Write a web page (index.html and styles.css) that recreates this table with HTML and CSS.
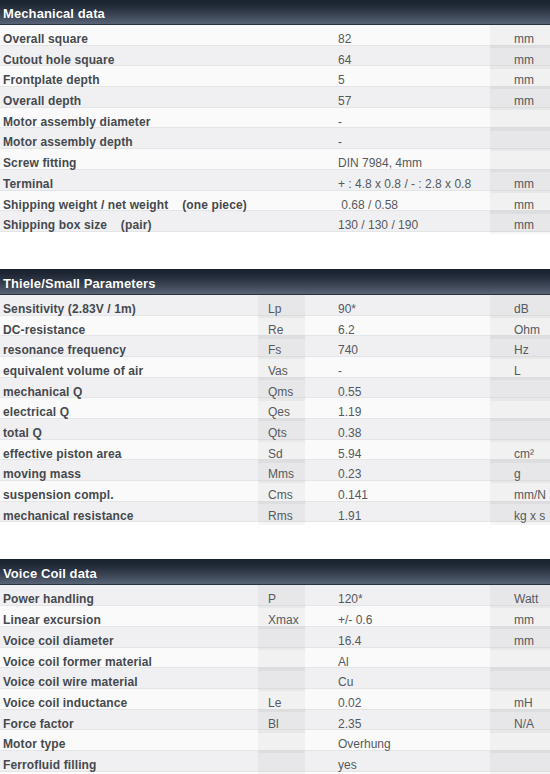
FILE: index.html
```html
<!DOCTYPE html>
<html>
<head>
<meta charset="utf-8">
<link rel="stylesheet" href="styles.css">
</head>
<body>
<section class="block lead">
  <div class="head">Mechanical data</div>
  <div class="row"><span class="lbl">Overall square</span><span class="sym plain"></span><span class="val">82</span><span class="unit">mm</span></div>
  <div class="row"><span class="lbl">Cutout hole square</span><span class="sym plain"></span><span class="val">64</span><span class="unit">mm</span></div>
  <div class="row"><span class="lbl">Frontplate depth</span><span class="sym plain"></span><span class="val">5</span><span class="unit">mm</span></div>
  <div class="row"><span class="lbl">Overall depth</span><span class="sym plain"></span><span class="val">57</span><span class="unit">mm</span></div>
  <div class="row"><span class="lbl">Motor assembly diameter</span><span class="sym plain"></span><span class="val">-</span><span class="unit"></span></div>
  <div class="row"><span class="lbl">Motor assembly depth</span><span class="sym plain"></span><span class="val">-</span><span class="unit"></span></div>
  <div class="row"><span class="lbl">Screw fitting</span><span class="sym plain"></span><span class="val">DIN 7984, 4mm</span><span class="unit"></span></div>
  <div class="row"><span class="lbl">Terminal</span><span class="sym plain"></span><span class="val">+ : 4.8 x 0.8 / - : 2.8 x 0.8</span><span class="unit">mm</span></div>
  <div class="row"><span class="lbl">Shipping weight / net weight &nbsp;&nbsp; (one piece)</span><span class="sym plain"></span><span class="val">&nbsp;0.68 / 0.58</span><span class="unit">mm</span></div>
  <div class="row"><span class="lbl">Shipping box size &nbsp;&nbsp; (pair)</span><span class="sym plain"></span><span class="val">130 / 130 / 190</span><span class="unit">mm</span></div>
</section>

<section class="block">
  <div class="head">Thiele/Small Parameters</div>
  <div class="row"><span class="lbl">Sensitivity (2.83V / 1m)</span><span class="sym">Lp</span><span class="val">90*</span><span class="unit">dB</span></div>
  <div class="row"><span class="lbl">DC-resistance</span><span class="sym">Re</span><span class="val">6.2</span><span class="unit">Ohm</span></div>
  <div class="row"><span class="lbl">resonance frequency</span><span class="sym">Fs</span><span class="val">740</span><span class="unit">Hz</span></div>
  <div class="row"><span class="lbl">equivalent volume of air</span><span class="sym">Vas</span><span class="val">-</span><span class="unit">L</span></div>
  <div class="row"><span class="lbl">mechanical Q</span><span class="sym">Qms</span><span class="val">0.55</span><span class="unit"></span></div>
  <div class="row"><span class="lbl">electrical Q</span><span class="sym">Qes</span><span class="val">1.19</span><span class="unit"></span></div>
  <div class="row"><span class="lbl">total Q</span><span class="sym">Qts</span><span class="val">0.38</span><span class="unit"></span></div>
  <div class="row"><span class="lbl">effective piston area</span><span class="sym">Sd</span><span class="val">5.94</span><span class="unit">cm²</span></div>
  <div class="row"><span class="lbl">moving mass</span><span class="sym">Mms</span><span class="val">0.23</span><span class="unit">g</span></div>
  <div class="row"><span class="lbl">suspension compl.</span><span class="sym">Cms</span><span class="val">0.141</span><span class="unit">mm/N</span></div>
  <div class="row"><span class="lbl">mechanical resistance</span><span class="sym">Rms</span><span class="val">1.91</span><span class="unit">kg x s</span></div>
</section>

<section class="block">
  <div class="head">Voice Coil data</div>
  <div class="row"><span class="lbl">Power handling</span><span class="sym">P</span><span class="val">120*</span><span class="unit">Watt</span></div>
  <div class="row"><span class="lbl">Linear excursion</span><span class="sym">Xmax</span><span class="val">+/- 0.6</span><span class="unit">mm</span></div>
  <div class="row"><span class="lbl">Voice coil diameter</span><span class="sym"></span><span class="val">16.4</span><span class="unit">mm</span></div>
  <div class="row"><span class="lbl">Voice coil former material</span><span class="sym"></span><span class="val">Al</span><span class="unit"></span></div>
  <div class="row"><span class="lbl">Voice coil wire material</span><span class="sym"></span><span class="val">Cu</span><span class="unit"></span></div>
  <div class="row"><span class="lbl">Voice coil inductance</span><span class="sym">Le</span><span class="val">0.02</span><span class="unit">mH</span></div>
  <div class="row"><span class="lbl">Force factor</span><span class="sym">Bl</span><span class="val">2.35</span><span class="unit">N/A</span></div>
  <div class="row"><span class="lbl">Motor type</span><span class="sym"></span><span class="val">Overhung</span><span class="unit"></span></div>
  <div class="row"><span class="lbl">Ferrofluid filling</span><span class="sym"></span><span class="val">yes</span><span class="unit"></span></div>
</section>
</body>
</html>
```

FILE: styles.css
```css
html, body {
  margin: 0;
  padding: 0;
  background: #ffffff;
}
body {
  width: 550px;
  font-family: "Liberation Sans", Arial, sans-serif;
  font-size: 12px;
  color: #55595e;
}
.block {
  margin-bottom: 37px;
}
.block.lead {
  margin-top: -1px;
}
.head {
  height: 25px;
  border-bottom: 1px solid #2a323e;
  box-sizing: content-box;
  background: linear-gradient(#1a2230 0%, #1e2634 18%, #262f3d 34%, #303a49 50%, #3c4656 66%, #4a5567 84%, #586375 100%);
  color: #ffffff;
  font-weight: bold;
  font-size: 13px;
  line-height: 30px;
  padding-left: 3px;
  letter-spacing: 0.1px;
  text-shadow: 0 0 1px rgba(0,0,0,0.4);
}
.row {
  display: grid;
  grid-template-columns: 258px 47px 185px 60px;
  height: 20.7px;
  box-sizing: border-box;
  border-bottom: 1px solid #e4e5e7;
  background: #fafafa;
}
.row:nth-child(even) {
  background: #f0f0f2;
}
.lead .row:nth-child(even) {
  background: #fafafa;
}
.lead .row:nth-child(odd) {
  background: #f0f0f2;
}
.row > span {
  white-space: nowrap;
  padding-top: 5px;
  line-height: 18px;
}
.lbl {
  padding-left: 3px;
  font-weight: bold;
  letter-spacing: 0.12px;
  color: #45494e;
}
.sym {
  padding-left: 10px;
  background: rgba(0,0,10,0.035);
}
.sym.plain {
  background: transparent;
}
.val {
  padding-left: 33px;
}
.unit {
  padding-left: 24px;
  background: rgba(0,0,10,0.035);
}
```
